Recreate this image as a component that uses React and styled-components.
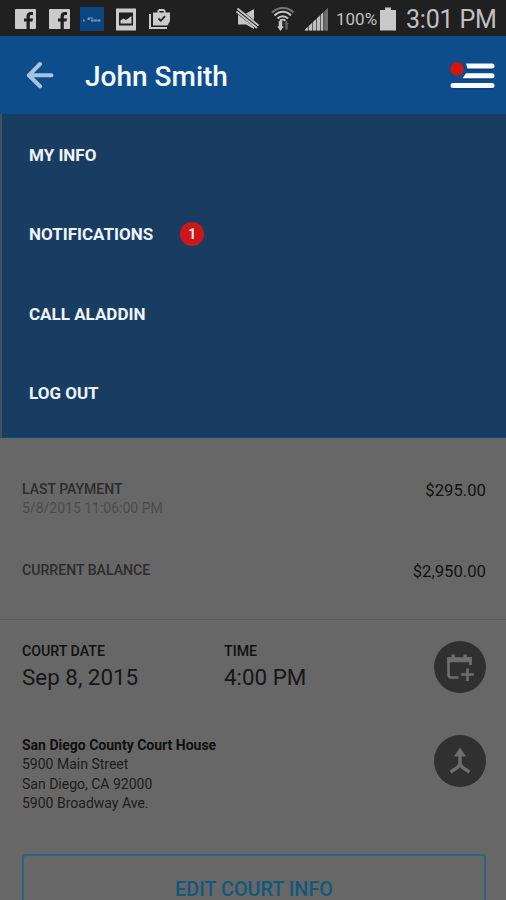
import styled, { createGlobalStyle } from 'styled-components';

const menuItems = [
  { label: 'MY INFO' },
  { label: 'NOTIFICATIONS', count: 1 },
  { label: 'CALL ALADDIN' },
  { label: 'LOG OUT' },
];

export default function App() {
  return (
    <Screen>
      <GlobalStyle />
      <StatusBar />
      <Header>
        <BackIcon />
        <Title>John Smith</Title>
        <MenuIcon />
      </Header>
      <Menu>
        {menuItems.map(({ label, count }) => (
          <MenuItem key={label}>
            <Text $size={17} $weight={700} $color="#eef4fb">
              {label}
            </Text>
            {count && <Badge>{count}</Badge>}
          </MenuItem>
        ))}
      </Menu>
      <Payments>
        <PaymentRow>
          <div>
            <Text $size={14} $weight={500} $color="#2c2c2c" $line={19}>
              LAST PAYMENT
            </Text>
            <Text $size={14} $color="#4b4b4b" $line={19}>
              5/8/2015 11:06:00 PM
            </Text>
          </div>
          <Amount>$295.00</Amount>
        </PaymentRow>
        <PaymentRow>
          <Text $size={14.1} $weight={500} $color="#2c2c2c" $line={19}>
            CURRENT BALANCE
          </Text>
          <Amount>$2,950.00</Amount>
        </PaymentRow>
      </Payments>
      <Court>
        <CourtRow>
          <DateCell>
            <Text $size={14.2} $weight={500} $color="#101010" $line={20}>
              COURT DATE
            </Text>
            <Text $size={22.4} $color="#161616" $line={32}>
              Sep 8, 2015
            </Text>
          </DateCell>
          <TimeCell>
            <Text $size={14.2} $weight={500} $color="#101010" $line={20}>
              TIME
            </Text>
            <Text $size={22.4} $color="#161616" $line={32}>
              4:00 PM
            </Text>
          </TimeCell>
          <RoundButton aria-label="Add to calendar">
            <CalendarIcon />
          </RoundButton>
        </CourtRow>
        <CourtRow>
          <Address>
            <Text $size={14} $weight={700} $color="#101010" $line={19.3}>
              San Diego County Court House
            </Text>
            <Text $size={14} $color="#1c1c1c" $line={19.3}>
              5900 Main Street
            </Text>
            <Text $size={14} $color="#1c1c1c" $line={19.3}>
              San Diego, CA 92000
            </Text>
            <Text $size={14} $color="#1c1c1c" $line={19.3}>
              5900 Broadway Ave.
            </Text>
          </Address>
          <RoundButton aria-label="Directions">
            <RouteIcon />
          </RoundButton>
        </CourtRow>
        <EditButton>EDIT COURT INFO</EditButton>
      </Court>
    </Screen>
  );
}

function StatusBar() {
  return (
    <Status>
      <StatusGroup $gap={13}>
        <FacebookIcon />
        <FacebookIcon />
        <AppTile>
          <svg width="24" height="24" viewBox="0 0 24 24">
            <path
              d="M3 13.5h1.600M7.500 12h2.200M11 13.500h10"
              stroke="#7c9ec4"
              strokeWidth="2"
              strokeDasharray="2.6 0.6"
            />
            <path d="M8 11h5" stroke="#7c9ec4" strokeWidth="1" />
          </svg>
        </AppTile>
        <PictureIcon />
        <ClipboardIcon />
      </StatusGroup>
      <StatusGroup $gap={0}>
        <MuteIcon />
        <WifiIcon />
        <SignalIcon />
        <Percent>100%</Percent>
        <BatteryIcon />
        <Clock>3:01 PM</Clock>
      </StatusGroup>
    </Status>
  );
}

function FacebookIcon() {
  return (
    <svg width="21" height="22" viewBox="0 0 21 22">
      <rect x="0" y="1" width="21" height="20" rx="1" fill="#cbcbcb" />
      <path
        d="M11.500 21v-7.500H9v-3h2.500V8.500C11.500 5.500 13 4 15.800 4H18v3h-1.500c-1.200 0-1.700.5-1.700 1.700v1.800H18l-.5 3h-2.700V21z"
        fill="#202020"
      />
    </svg>
  );
}

function PictureIcon() {
  return (
    <svg width="20" height="23" viewBox="0 0 20 23">
      <path d="M0 0.500h20v22H0zM3 4.500v13h14V4.500z" fill="#cbcbcb" fillRule="evenodd" />
      <path d="M4.500 15.500v-3l3-2 2.500 1.500 5.500-4v7.500z" fill="#cbcbcb" />
    </svg>
  );
}

function ClipboardIcon() {
  return (
    <svg width="22" height="22" viewBox="0 0 22 22">
      <path d="M1 6v14h17" fill="none" stroke="#cbcbcb" strokeWidth="2" />
      <path
        d="M4 4.500h4.500V2.500L10 1h5l1.500 1.500v2H21V13l-2.500 4.500H4zM10.300 4.500h4.400V3h-4.400z"
        fill="#cbcbcb"
        fillRule="evenodd"
      />
      <path d="M9.500 10.500l2.300 2.300 4.200-4.600" fill="none" stroke="#202020" strokeWidth="1.800" />
    </svg>
  );
}

function MuteIcon() {
  return (
    <svg width="35" height="24" viewBox="0 0 35 24">
      <path d="M2 7.500h6.500L18 2v20l-8-4.500H2z" fill="#c6c6c6" />
      <path d="M0 2.500l23 18" stroke="#202020" strokeWidth="5.600" />
      <path d="M0.500 4.500l20.500 16.500M1.500 1.500L22.500 18.500" stroke="#c6c6c6" strokeWidth="1.900" />
    </svg>
  );
}

function WifiIcon() {
  return (
    <svg width="33" height="26" viewBox="0 0 33 26" fill="none" strokeWidth="2">
      <path d="M1 6.500C7 .4 17 .4 22.500 6.500" stroke="#777" />
      <path d="M3.500 9.500c5-5 12-5 16.500 0M6.500 12.500c3-3 7.500-3 10.500 0" stroke="#c6c6c6" />
      <path d="M9 14.700c1.500-1.400 4-1.400 5.500 0" stroke="#c6c6c6" />
      <path d="M9.500 15v7" stroke="#c6c6c6" strokeWidth="3.600" />
      <path d="M6.200 20.500h6.600L9.500 25z" fill="#c6c6c6" />
      <path d="M15.500 23.500V17" stroke="#5c5c5c" strokeWidth="2.500" />
      <path d="M13.200 18h4.600l-2.300-3.500z" fill="#5c5c5c" />
    </svg>
  );
}

function SignalIcon() {
  return (
    <svg width="32" height="24" viewBox="0 0 32 24">
      <path d="M0 23.500L24 1v22.500z" fill="#5b5b5b" />
      <path
        d="M1 23.500v-1l3-2.600v3.600zM5 23.500v-4.700l3-2.800v7.500zM9 23.500v-8.500l3-2.800v11.300zM13 23.500V11.300l3-2.800v15zM17 23.500V7.500l2-1.900v17.900z"
        fill="#c0c0c0"
      />
      <path d="M20.500 23.500V4.400L24 1v22.500z" fill="#707070" />
    </svg>
  );
}

function BatteryIcon() {
  return (
    <svg width="16" height="24" viewBox="0 0 16 24">
      <path d="M5 0.500h6v2.500h5v20.500H0V3h5z" fill="#c9c9c9" />
    </svg>
  );
}

function BackIcon() {
  return (
    <svg width="28" height="28" viewBox="0 0 28 28">
      <path
        d="M14 3L2.800 14.300l11.200 11M3 14.300h22.500"
        fill="none"
        stroke="#a5c3e2"
        strokeWidth="4"
        strokeLinecap="round"
        strokeLinejoin="round"
      />
    </svg>
  );
}

function MenuIcon() {
  return (
    <svg width="46" height="30" viewBox="0 0 46 30">
      <path
        d="M18.500 9.800h25M14 19.300h29M3 29h41"
        stroke="#0a3a84"
        strokeWidth="1.500"
        strokeLinecap="round"
      />
      <path
        d="M17 3.500h26a2.300 2.300 0 0 1 0 5H18.500zM17 13.200h26a2.400 2.400 0 0 1 0 5H13.500z"
        fill="#f8fbff"
      />
      <rect x="1.500" y="23" width="44" height="5" rx="2.500" fill="#f8fbff" />
      <circle cx="8" cy="9" r="6.700" fill="#d5150f" />
    </svg>
  );
}

function CalendarIcon() {
  return (
    <svg width="28" height="28" viewBox="0 0 28 28">
      <path
        d="M12.500 24.500H5A2.500 2.500 0 0 1 2.500 22V5.500h22V12"
        fill="none"
        stroke="#6e6e6e"
        strokeWidth="2.600"
      />
      <path d="M1.200 4.500h24.600v4.700H1.200zM5.500 1.500h3.300v4H5.500zM17.500 1.500h3.300v4h-3.300z" fill="#6e6e6e" />
      <path d="M21.500 15.500v12.500M15.200 21.500h12.600" stroke="#6e6e6e" strokeWidth="2.600" />
    </svg>
  );
}

function RouteIcon() {
  return (
    <svg width="24" height="28" viewBox="0 0 24 28">
      <path d="M12 0.500l6 9H6z" fill="#6e6e6e" />
      <path
        d="M12 7v9.500c0 1.500-1 2.500-2.500 3.800L2.500 25M12 16.500c0 1.500 1 2.500 2.500 3.800l7 4.700"
        fill="none"
        stroke="#6e6e6e"
        strokeWidth="3.400"
      />
    </svg>
  );
}

const GlobalStyle = createGlobalStyle`
  * {
    box-sizing: border-box;
  }

  body {
    margin: 0;
    background: #676767;
    font-family: Roboto, 'Liberation Sans', sans-serif;
  }

  svg {
    display: block;
    flex-shrink: 0;
  }
`;

const Screen = styled.div`
  width: 506px;
  height: 900px;
  overflow: hidden;
  background: #676767;
`;

const Status = styled.div`
  height: 36px;
  display: flex;
  justify-content: space-between;
  align-items: center;
  padding: 2px 10px 0 15px;
  background: #202020;
`;

const StatusGroup = styled.div`
  display: flex;
  align-items: center;
  gap: ${({ $gap }) => $gap}px;
`;

const AppTile = styled.div`
  width: 24px;
  height: 24px;
  margin: 0 -1px 0 -3px;
  background: #0c4680;
`;

const Percent = styled.span`
  width: 44px;
  font-size: 17px;
  line-height: 24px;
  color: #c0c0c0;
`;

const Clock = styled.span`
  width: 90px;
  margin-left: 10px;
  padding-top: 1px;
  font-size: 25px;
  line-height: 32px;
  letter-spacing: -0.2px;
  white-space: nowrap;
  color: #c0c0c0;
`;

const Header = styled.header`
  height: 78px;
  display: flex;
  align-items: center;
  padding: 0 11px 0 26px;
  background: #0e4d8b;
`;

const Title = styled.h1`
  flex: 1;
  margin: 0 0 0 31px;
  padding-top: 3px;
  font-size: 28px;
  font-weight: 500;
  line-height: 34px;
  color: #f5f9ff;
`;

const Menu = styled.nav`
  height: 324px;
  padding: 1px 0 0 27px;
  border-left: 2px solid #404f64;
  border-bottom: 1px solid #164a7c;
  background: #193d60;
`;

const MenuItem = styled.div`
  height: 79.5px;
  display: flex;
  align-items: center;
  gap: 27px;
`;

const Text = styled.div`
  font-size: ${({ $size }) => $size}px;
  font-weight: ${({ $weight }) => $weight || 400};
  line-height: ${({ $line }) => ($line ? `${$line}px` : 'normal')};
  color: ${({ $color }) => $color};
  white-space: nowrap;
`;

const Badge = styled.span`
  width: 24px;
  height: 24px;
  border-radius: 50%;
  background: #cc1719;
  color: #f6e9ea;
  font-size: 14px;
  font-weight: 700;
  line-height: 25px;
  text-align: center;
`;

const Payments = styled.section`
  height: 182px;
  padding: 42px 20px 0 22px;
  border-bottom: 1px solid #5c5c5c;
`;

const PaymentRow = styled.div`
  height: 80.5px;
  display: flex;
  justify-content: space-between;
`;

const Amount = styled.div`
  font-size: 16.7px;
  line-height: 22px;
  color: #121212;
`;

const Court = styled.section`
  padding: 21px 20px 0 22px;
`;

const CourtRow = styled.div`
  height: 94px;
  display: flex;
`;

const DateCell = styled.div`
  width: 202px;
`;

const TimeCell = styled.div`
  flex: 1;
`;

const Address = styled.div`
  flex: 1;
  padding-top: 1px;
`;

const RoundButton = styled.button`
  width: 52px;
  height: 52px;
  display: flex;
  align-items: center;
  justify-content: center;
  padding: 0;
  border: none;
  border-radius: 50%;
  background: #303030;
`;

const EditButton = styled.button`
  width: 100%;
  height: 70px;
  margin-top: 25px;
  border: 2px solid #2b6480;
  border-radius: 4px;
  background: transparent;
  color: #11597a;
  font-family: inherit;
  font-size: 19.8px;
  font-weight: 500;
`;
